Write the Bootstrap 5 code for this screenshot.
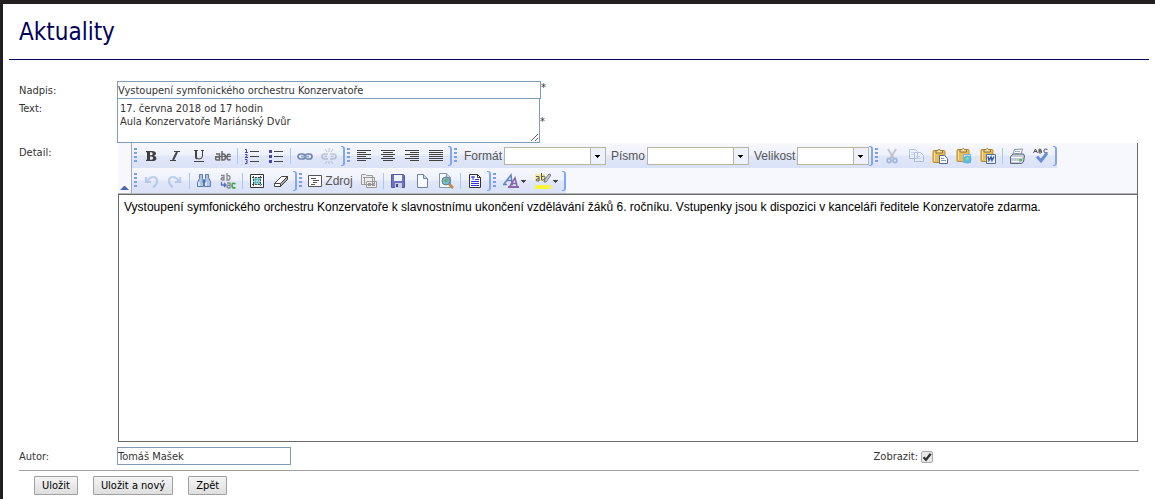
<!DOCTYPE html>
<html lang="cs">
<head>
<meta charset="utf-8">
<meta name="viewport" content="width=device-width, initial-scale=1">
<title>Aktuality</title>
<link rel="stylesheet" href="https://cdn.jsdelivr.net/npm/bootstrap@5.3.0/dist/css/bootstrap.min.css">
<style>
body{font-family:"DejaVu Sans Condensed","Noto Sans",sans-serif;font-size:11px;line-height:13px;color:#333;background:#fff}
.page{border-top:4px solid #231f20;border-left:3px solid #231f20}
.title-bar{margin:0 6px;padding:10px;height:56px;border-bottom:1px solid #00005a}
.title-bar h1{font-size:24px;line-height:36px;font-weight:400;color:#00005a;margin:0}
.news-form{padding:21px 16px 0}
.field-name{flex:0 0 98px;padding-top:3px}
.box{border:1px solid #7f9db9;border-radius:0;padding:0;color:#333;background:#fff;display:block;font-size:11px}
.box-line{height:18px;width:424px;line-height:16px}
.box-author{width:174px}
.box-area{width:423px;height:45px;padding:3px 2px;line-height:13px;resize:both;margin-top:-1px}
.star{color:#333;font-size:11px}
.editor{flex:1 1 0;min-width:0;margin:0 1px;border-right:1px solid #696969}
.tools{background:#f7f8fd;height:51px;border-bottom:1px solid #b5b5b8}
.fold{width:14px;border:0;border-right:1px solid #a5a9b5;background:#f7f8fd;padding:0 0 3px;display:flex;align-items:flex-end;justify-content:center}
.tool-group{height:25px;background:linear-gradient(#f7f8fd,#eef1fb 48%,#e1e7f8 52%,#dae2f8);display:flex;align-items:center}
.tool-group::before{content:"";width:3px;height:15px;margin:0 2px;background:repeating-linear-gradient(#7a9ff0 0 2px,transparent 2px 4px)}
.tool-group::after{content:"";width:4px;height:20px;border:2px solid #82a5f5;border-left:0;border-top-width:1px;border-bottom-width:1px;border-radius:0 3px 3px 0}
.tool{width:24px;height:25px;border:0;padding:1px 0 0;background:none;display:flex;align-items:center;justify-content:center;color:#555;flex:none}
.tool svg{flex:none}
.tool-wide{width:53px;font:12px/16px "Liberation Sans",sans-serif;gap:3px}
.tool-pick{width:32px;gap:2px}
.faded{opacity:.38}
.bar{width:1px;height:16px;background:#a9c7f5;margin:0 2px}
.pick-name{font:12px/18px "Liberation Sans",sans-serif;color:#555;margin:0 2px 0 5px}
.pick{appearance:none;width:102px;height:18px;margin-top:1px;border:1px solid #b5b5a0;border-radius:0;padding:0 18px 0 3px;font-size:11px;background:#fff url("data:image/svg+xml,%3Csvg xmlns='http://www.w3.org/2000/svg' width='15' height='16'%3E%3Cpath d='M0 0h15v16H0z' fill='%23eef1fb'/%3E%3Cpath d='M0 0h1v16H0z' fill='%23b5b5a0'/%3E%3Cpath d='M5 7h5v1H9v1H8v1H7V9H6V8H5z'/%3E%3C/svg%3E") no-repeat right center}
.pick-short{width:72px}
.sheet{border:1px solid #696969;border-right:0;min-height:248px;padding:5px;background:#fff;color:#000;font:12px/15px "Liberation Sans",sans-serif;outline:0}
.foot{border-bottom:1px solid #a0a0a0;padding:5px 0}
.show{margin-right:206px;gap:3px}
.show input{appearance:none;width:12px;height:12px;margin:2px 0 0;border:1px solid #a8a8a8;border-radius:2px;background:#e8e8e8}
.show input:checked{background:#e8e8e8 url("data:image/svg+xml,%3Csvg xmlns='http://www.w3.org/2000/svg' viewBox='0 0 10 10'%3E%3Cpath d='M1.5 5.2 4 7.7 8.7 1.8' fill='none' stroke='%23333' stroke-width='2.3'/%3E%3C/svg%3E")}
.actions{padding:5px 15px 3px;gap:15px}
.act{height:19px;border:1px solid #a0a0a0;border-radius:1px;padding:0 7px;background:linear-gradient(#f5f5f5,#dedede);color:#000;font-size:11px;line-height:17px}
</style>
</head>
<body>
<div class="page min-vh-100">
<header class="title-bar"><h1>Aktuality</h1></header>
<form class="news-form">
<div class="d-flex"><label class="field-name" for="headline">Nadpis:</label><input class="box box-line" id="headline" value="Vystoupení symfonického orchestru Konzervatoře"><span class="star">*</span></div>
<div class="d-flex"><label class="field-name" for="summary">Text:</label><textarea class="box box-area" id="summary">17. června 2018 od 17 hodin
Aula Konzervatoře Mariánský Dvůr</textarea><span class="star align-self-center">*</span></div>
<div class="d-flex">
<span class="field-name" id="detail-name">Detail:</span>
<div class="editor">
<div class="tools d-flex">
<button type="button" class="fold" aria-label="Sbalit"><svg width="9" height="4"><path d="M4 0h1l4 4H0z" fill="#4469b0"/></svg></button>
<div class="flex-fill">
<div class="d-flex">
<div class="tool-group">
<button type="button" class="tool" aria-label="Tučné"><svg width="16" height="16"><path d="M3 3h6q4 0 4 2.500Q13 7.300 11 7.700 13.500 8.200 13.500 10.200 13.500 13 9.500 13H3v-1l1-.4V4.400L3 4zm4 1.200v3h1.200q1.500 0 1.500-1.500T8.200 4.200zm0 4.200v3.300h1.400q1.700 0 1.700-1.700T8.400 8.400z" fill="#404040" fill-rule="evenodd"/></svg></button>
<button type="button" class="tool" aria-label="Kurzíva"><svg width="16" height="16" stroke="#444" fill="none"><path d="M7 3.500h6M3 12.500h6"/><path d="m10 4-4 8" stroke-width="2"/></svg></button>
<button type="button" class="tool" aria-label="Podtržené"><svg width="16" height="16" stroke="#444" fill="none"><path d="M3 2.500h4m3 0h3M3 13.500h10M11.500 3v5q0 3-3.500 3-2.500 0-3-2"/><path d="M5 3v6q0 1 1 1.600" stroke-width="2"/></svg></button>
<button type="button" class="tool" aria-label="Přeškrtnuté"><svg width="16" height="16" stroke="#666" fill="none" stroke-width="1.500"><path d="M1 6h3.500v6H2Q.5 12 .5 10.500T2 9h2.500M7 3v9h1.500Q10.500 12 10.500 9T8 6H7M15.500 7Q12 5 12 9t3.500 2.500"/><path d="M0 8.500h16" stroke-width="1"/></svg></button>
<span class="bar"></span>
<button type="button" class="tool" aria-label="Číslování"><svg width="16" height="16"><path d="M6 3.500h9M6 8.500h9M6 13.500h9" stroke="#444"/><path d="M1 1.500h1.500v3M1 4.500h3M1 6.500h2v1.500L1 9.500h3M1 11.500h2v2H2h1v2H1" stroke="#4545a8" fill="none"/></svg></button>
<button type="button" class="tool" aria-label="Odrážky"><svg width="16" height="16"><path d="M6 3.500h9M6 8.500h9M6 13.500h9" stroke="#444"/><path d="M1 2h3v3H1zM1 7h3v3H1zM1 12h3v3H1z" fill="#4545a8"/></svg></button>
<span class="bar"></span>
<button type="button" class="tool" aria-label="Odkaz"><svg width="16" height="16" fill="none" stroke="#6b86ae" stroke-width="1.700"><rect x="1" y="6" width="7" height="5" rx="2.500"/><rect x="8" y="6" width="7" height="5" rx="2.500"/><path d="M4 8.500h8" stroke="#8ba3c4"/></svg></button>
<button type="button" class="tool faded" aria-label="Odstranit odkaz"><svg width="16" height="16" fill="none" stroke="#6b7d9c" stroke-width="1.600"><path d="M7 6H4Q1 6 1 8.500T4 11h3M9 6h3q3 0 3 2.500T12 11H9M3.500 8.500H6m4 0h2.500"/><path d="m4 1 2 3m2-4v4m4-3-2 3M4 16l2-3m2 3v-3m4 3-2-3" stroke-width="1"/></svg></button>
</div>
<div class="tool-group">
<button type="button" class="tool" aria-label="Vlevo"><svg width="16" height="16" stroke="#404040"><path d="M1 2.500h14M1 4.500h9M1 6.500h14M1 8.500h9M1 10.500h14M1 12.500h9"/></svg></button>
<button type="button" class="tool" aria-label="Na střed"><svg width="16" height="16" stroke="#404040"><path d="M1 2.500h14M3 4.500h10M1 6.500h14M3 8.500h10M1 10.500h14M3 12.500h10"/></svg></button>
<button type="button" class="tool" aria-label="Vpravo"><svg width="16" height="16" stroke="#404040"><path d="M1 2.500h14M6 4.500h9M1 6.500h14M6 8.500h9M1 10.500h14M6 12.500h9"/></svg></button>
<button type="button" class="tool" aria-label="Do bloku"><svg width="16" height="16" stroke="#404040"><path d="M1 2.500h14M1 4.500h14M1 6.500h14M1 8.500h14M1 10.500h14M1 12.500h14"/></svg></button>
</div>
<div class="tool-group">
<label class="pick-name" for="fmt">Formát</label><select class="pick" id="fmt"><option></option></select>
<label class="pick-name" for="face">Písmo</label><select class="pick" id="face"><option></option></select>
<label class="pick-name" for="size">Velikost</label><select class="pick pick-short" id="size"><option></option></select>
</div>
<div class="tool-group">
<button type="button" class="tool faded" aria-label="Vyjmout"><svg width="16" height="16" fill="none" stroke="#4c6fae" stroke-width="1.800"><path d="m4 1 6 10M12 1 6 11" stroke="#778"/><circle cx="5" cy="12.500" r="2"/><circle cx="11" cy="12.500" r="2"/></svg></button>
<button type="button" class="tool faded" aria-label="Kopírovat"><svg width="16" height="16" fill="#eef4ff" stroke="#5576b0"><path d="M1.500 1.500h6l2 2v7h-8zM6.500 4.500h6l3 3v6h-9z"/><path d="M3 4.500h3M3 6.500h3M8 8.500h4M8 10.500h5" stroke="#88a3d0"/></svg></button>
<button type="button" class="tool" aria-label="Vložit"><svg width="16" height="16"><rect x="1" y="2.500" width="12" height="12" rx="1" fill="#e6bd58" stroke="#ba8b35"/><path d="M2.500 4v9" stroke="#f8df94"/><path d="M4 5V2.500h2Q7-.5 8.500 2.500h2V5z" fill="#f4df9c" stroke="#917136"/><path d="M7.500 7.500h5l3 3v5h-8z" fill="#fff" stroke="#526886"/><path d="M9 10.500h3M9 12.500h5" stroke="#8197b8"/></svg></button>
<button type="button" class="tool" aria-label="Vložit jako text"><svg width="16" height="16"><rect x="1" y="1.500" width="12" height="12" rx="1" fill="#e6bd58" stroke="#ba8b35"/><path d="M2.500 3v9" stroke="#f8df94"/><path d="M4 4V1.500h2Q7-1 8.500 1.500h2V4z" fill="#f4df9c" stroke="#917136"/><path d="M7.500 6.500h7v8h-7z" fill="#d5ecf8" stroke="#83acd0"/><circle cx="11.500" cy="11.500" r="4" fill="#5fb9dc"/><path d="m9 10 3-1 1 2-2 2z" fill="#86d7b1"/></svg></button>
<button type="button" class="tool" aria-label="Vložit z Wordu"><svg width="16" height="16"><rect x="1" y="1.500" width="12" height="12" rx="1" fill="#e6bd58" stroke="#ba8b35"/><path d="M2.500 3v9" stroke="#f8df94"/><path d="M4 4V1.500h2Q7-1 8.500 1.500h2V4z" fill="#f4df9c" stroke="#917136"/><path d="M6.500 6.500h9v9h-9z" fill="#eef4ff" stroke="#52709c"/><path d="m8 8.500 1 4 2-3.500 1 3.500 2-4" fill="none" stroke="#385a9c" stroke-width="1.500"/></svg></button>
<span class="bar"></span>
<button type="button" class="tool" aria-label="Tisk"><svg width="16" height="16"><path d="m5.500 1.500 8-.5-1.500 6H3.500z" fill="#f7faff" stroke="#8494ae"/><path d="M6 3.500h5M5.500 5.500h5" stroke="#aab7ca"/><path d="m1.500 8.500 3-2.500h10l1 2-1 6-2 1.500h-11z" fill="#c3ccda" stroke="#5f6878"/><path d="M2 9.500h11M3 13.500h7" stroke="#fff"/><path d="M10 11h3v2h-3z" fill="#50c444"/></svg></button>
<button type="button" class="tool" aria-label="Kontrola pravopisu"><svg width="16" height="16" fill="none"><path d="M.5 5 2.500 1 4.500 5M1 3.500h3M6 1v4h2q2-1 0-2H6h2q1-2-2-2M14.500 1.500Q11 0 11 3t3.500 1.500" stroke="#555"/><path d="m4 8.500 4 4.500 6-8" stroke="#6a8fd2" stroke-width="3"/></svg></button>
</div>
</div>
<div class="d-flex">
<div class="tool-group">
<button type="button" class="tool faded" aria-label="Zpět o krok"><svg width="16" height="16" fill="none" stroke="#6b9ae0" stroke-width="2.200"><path d="M3 4v5h5M4 8q3-4 6-4 4 0 4 4 0 4-4 6"/></svg></button>
<button type="button" class="tool faded" aria-label="Znovu"><svg width="16" height="16" fill="none" stroke="#6b9ae0" stroke-width="2.200"><path d="M13 4v5H8m4-1Q9 4 6 4 2 4 2 8q0 4 4 6"/></svg></button>
<span class="bar"></span>
<button type="button" class="tool" aria-label="Hledat"><svg width="16" height="16" fill="#b0c5e6" stroke="#587bb0"><path d="M3.500 1.500h3v4l1 2v6h-6v-4l2-4zM9.500 1.500h3v3l2 4v5h-6v-6l1-2z"/><path d="M7 7h2v3H7z" fill="#44628f"/><path d="M3 9v4m7-4v4" stroke="#fff"/></svg></button>
<button type="button" class="tool" aria-label="Nahradit"><svg width="16" height="16" fill="none" stroke="#888" stroke-width="1.300"><path d="M1 2.500h3V7H2.500Q1 7 1 6t3-1.500M7 0v7h1.500Q10 7 10 4.500T7 3M7 10h3v5H8.500Q7 15 7 13.500T10 12"/><path d="M15.500 11Q12 9 12 12.500t3.500 2" stroke="#38a83f" stroke-width="1.700"/><path d="M1.500 9v3h4M4 10l2 2-2 2" stroke="#5472ba"/></svg></button>
<span class="bar"></span>
<button type="button" class="tool" aria-label="Vybrat vše"><svg width="16" height="16"><path d="M1.500 1.500h13v13h-13z" fill="#fff" stroke="#333"/><path d="M4 4h8v8H4z" fill="#a6dedd"/><path d="M3 4.500h10M3 11.500h10M4.500 3v10M11.500 3v10" stroke="#444" stroke-dasharray="2 1"/><path d="M5 6.500h6M5 9.500h6M6.500 5v6M9.500 5v6" stroke="#61b8ba"/></svg></button>
<button type="button" class="tool" aria-label="Guma"><svg width="16" height="16"><path d="m1.500 10.500 7-7h6v3l-7 7h-6z" fill="#fff" stroke="#444"/><path d="m7.500 10.500 7-7v3l-7 7z" fill="#aaa" stroke="#444"/><path d="M1.500 10.500h6" stroke="#444"/></svg></button>
</div>
<div class="tool-group">
<button type="button" class="tool tool-wide"><svg width="14" height="14"><path d="M.5 1.500h13v11H.5z" fill="#fff" stroke="#555"/><path d="M3 4.500h5M5 6.500h6M5 8.500h4M3 10.500h4" stroke="#555"/></svg><span>Zdroj</span></button>
<button type="button" class="tool" aria-label="Šablony"><svg width="16" height="16" fill="#eee" stroke="#999"><path d="M.5 11.500v-10h4l1 1h6v9zM3.500 4.500h10v7h-10zM5.500 8.500h10v6h-10z"/><path d="M2 4.500h7M7 10.500h3m1 0h3M7 12.500h3m1 0h3"/></svg></button>
<span class="bar"></span>
<button type="button" class="tool" aria-label="Uložit dokument"><svg width="16" height="16"><path d="M1.500 1.500h12l1 1v12h-13z" fill="#6e72c5" stroke="#555a9d"/><path d="M4 2h8v6H4z" fill="#eef3ff"/><path d="M5 10h7v5H5z" fill="#c8cfe5"/><path d="M6 11h2v3H6z" fill="#44487d"/></svg></button>
<button type="button" class="tool" aria-label="Nová stránka"><svg width="16" height="16"><path d="M3.500 1.500h6l4 4v9h-10z" fill="#f8fbff" stroke="#6e83a5"/><path d="M9.500 1.500v4h4" fill="#c5d5ed" stroke="#6e83a5"/></svg></button>
<button type="button" class="tool" aria-label="Náhled"><svg width="16" height="16"><path d="M1.500.5h7l4 4v10h-11z" fill="#f8fbff" stroke="#8296b4"/><path d="M8.500.5v4h4" fill="#c5d5ed" stroke="#8296b4"/><path d="m11 11 4 4" stroke="#ba8746" stroke-width="2.500"/><circle cx="8" cy="8" r="4" fill="#76bdd5" stroke="#68798d"/><path d="m6 7 3-2 1 2-2 3z" fill="#65ac70"/></svg></button>
<span class="bar"></span>
<button type="button" class="tool" aria-label="Šablona dokumentu"><svg width="16" height="16"><path d="M2.500 1.500h8l3 3v10h-11z" fill="#fff" stroke="#333"/><path d="M10.500 1.500v3h3" fill="none" stroke="#333"/><path d="M4 4h4M6 3v4M8 6.500h4M4 8.500h8M4 10.500h8M4 12.500h8" stroke="#3430dd"/></svg></button>
</div>
<div class="tool-group">
<button type="button" class="tool tool-pick" aria-label="Barva textu"><svg width="16" height="16" fill="none"><path d="m1 11 7-9 1 9M4 7.500h5M0 11.500h4m3 0h3" stroke="#6384b8" stroke-width="1.500"/><path d="m7 13 5-8 2 8M9 10.500h4" stroke="#8a62aa" stroke-width="1.500"/><path d="M5 14h11" stroke="#8a62aa" stroke-width="2"/></svg><svg width="5" height="3"><path d="M0 0h5v1H4v1H3v1H2V2H1V1H0z" fill="#444"/></svg></button>
<button type="button" class="tool tool-pick" aria-label="Barva pozadí"><svg width="16" height="16" fill="none"><path d="M0 1h10v7H0z" fill="#f4ea9c"/><path d="M1 3.500h3V8H2.500Q1 8 1 7t3-1.500M6.500 0v7H8q2 0 2-2.500T6.500 4" stroke="#555"/><path d="m9 9 1-3 4-5 2 1-5 7z" fill="#c3cbd9" stroke="#777"/><path d="M0 12h16v4H0z" fill="#f8f53c"/></svg><svg width="5" height="3"><path d="M0 0h5v1H4v1H3v1H2V2H1V1H0z" fill="#444"/></svg></button>
</div>
</div>
</div>
</div>
<div class="sheet" contenteditable="true" role="textbox" aria-labelledby="detail-name" spellcheck="false">Vystoupení symfonického orchestru Konzervatoře k slavnostnímu ukončení vzdělávání žáků 6. ročníku. Vstupenky jsou k dispozici v kanceláři ředitele Konzervatoře zdarma.</div>
</div>
</div>
<div class="foot d-flex">
<label class="field-name" for="author">Autor:</label><input class="box box-line box-author" id="author" value="Tomáš Mašek">
<div class="show d-flex align-items-center ms-auto"><label for="visible">Zobrazit:</label><input type="checkbox" id="visible" checked></div>
</div>
<div class="actions d-flex"><button class="act">Uložit</button><button class="act">Uložit a nový</button><button type="button" class="act">Zpět</button></div>
</form>
</div>
<script src="https://cdn.jsdelivr.net/npm/bootstrap@5.3.0/dist/js/bootstrap.bundle.min.js"></script>
</body>
</html>
